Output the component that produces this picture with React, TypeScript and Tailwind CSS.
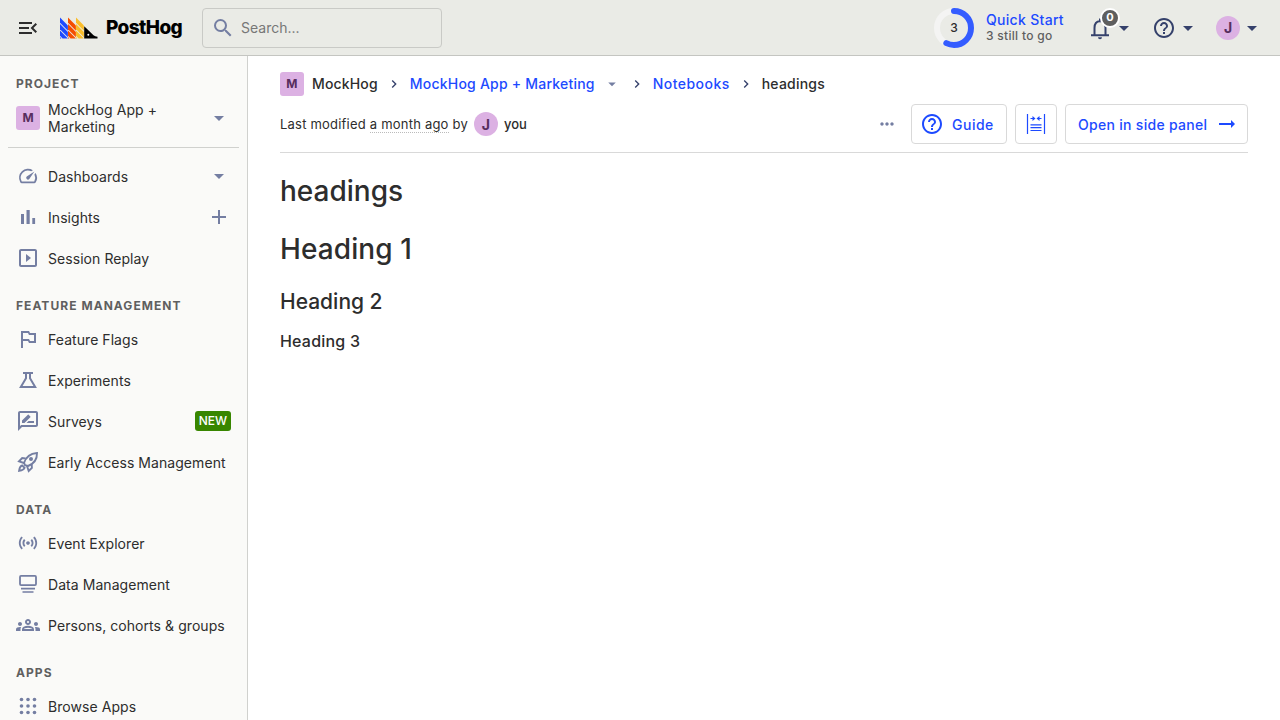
import type { ReactNode } from 'react';
import {
  MdMenuOpen, MdSearch, MdHelpOutline, MdArrowDropDown, MdChevronRight, MdMoreHoriz,
  MdOutlinedFlag, MdOutlineRateReview, MdOutlineGroups, MdAdd, MdOutlineSlideshow, MdSensors,
} from 'react-icons/md';

function Icon({ children }: { children: ReactNode }) {
  return <svg viewBox="0 0 24 24" className="size-6 shrink-0" fill="none" stroke="currentColor" strokeWidth="2">{children}</svg>;
}

const Gauge = () => (
  <Icon>
    <g transform="translate(1.2 1.2) scale(0.9)" fill="currentColor" stroke="none">
      <path d="M20.380 8.570l-1.230 1.850a8 8 0 0 1-.22 7.580H5.070A8 8 0 0 1 15.580 6.850l1.850-1.230A10 10 0 0 0 3.350 19a2 2 0 0 0 1.720 1h13.850a2 2 0 0 0 1.740-1 10 10 0 0 0-.27-10.440z" />
      <path d="M10.590 15.410a2 2 0 0 0 2.830 0l5.660-8.490-8.490 5.660a2 2 0 0 0 0 2.830z" />
    </g>
  </Icon>
);
const Bars = () => (
  <Icon><path d="M5 9h3v10H5zM10.500 5h3.200v14h-3.200zM16.300 13h2.800v6h-2.800z" fill="currentColor" stroke="none" /></Icon>
);
const Flask = () => (
  <Icon><path d="M7 5h10M10 5v5.200L4.800 19h14.400L14 10.200V5" /></Icon>
);
const Rocket = () => (
  <Icon>
    <path d="M9 15.200 8 13C9.700 7.500 13.500 3.600 21 3c.2 6.600-3.600 10.900-9 13z" strokeWidth="1.900" />
    <path d="M9.600 8.400 6.200 8.100 3 11.300l5 1.700M15.700 14.400l.2 3.400-3.200 3.200-1.700-5M6.300 15.500c-2 .3-2.800 2.600-3.200 5.300 2.600-.4 5-1 5.500-3z" strokeWidth="1.900" />
    <circle cx="15" cy="9" r="2" fill="currentColor" stroke="none" />
  </Icon>
);
const Database = () => (
  <Icon><rect x="4" y="3.900" width="16" height="9.200" rx="1" strokeWidth="1.800" /><path d="M5 16.600h14M6.500 20h11" strokeWidth="1.700" /></Icon>
);
const Dots = () => (
  <Icon>
    {[5.5, 12, 18.5].map((y) => [5.5, 12, 18.5].map((x) => (
      <circle key={`${x}-${y}`} cx={x} cy={y} r="1.8" fill="currentColor" stroke="none" />
    )))}
  </Icon>
);
const Bell = () => (
  <Icon>
    <path d="M3 19.200h18M6.500 19v-7c0-4.200 2-6.800 5.500-6.800s5.500 2.600 5.500 6.800v7" />
    <path d="M12 2.500v2.500" />
    <path d="M10 21.300h4a2 2 0 0 1-4 0z" fill="currentColor" stroke="none" />
  </Icon>
);
const WidthToggle = () => (
  <Icon>
    <path d="M3.500 2v20M20.500 2v20" strokeWidth="1.200" />
    <path d="M6.500 12.800h11M6.500 15.600h11M6.500 18.500h11M6.500 6.500h4M17.500 6.500h-4" strokeWidth="1.200" />
    <path d="M8.500 4v5l3-2.500zM15.500 4v5l-3-2.500z" fill="currentColor" stroke="none" />
  </Icon>
);
const ArrowRight = () => (
  <Icon><path d="M4 11h12V8l4 4-4 4v-3H4z" fill="currentColor" stroke="none" /></Icon>
);

function Stripes() {
  return (
    <>
      <path d="M0 .5 7.900 8.400V13.700L0 5.800z" />
      <path d="M0 7 7.900 14.900V20.200L0 12.300z" />
      <path d="M0 13.500 7.900 21.400H2.600L0 18.800z" />
      <path d="M0 20 1.400 21.400H0z" />
    </>
  );
}

function Logo() {
  return (
    <svg viewBox="0 0 38 22" className="h-[22px] w-[38px] shrink-0">
      <g fill="#1d4aff"><Stripes /></g>
      <g fill="#f54e00" transform="translate(8 0)"><Stripes /></g>
      <g fill="#f9bd2b" transform="translate(16 0)"><Stripes /></g>
      <path d="M24.200 9.300 33.500 18.300c1.100.9 2.300 1.300 4 1.400V21.400H24.200z" />
      <circle cx="28.300" cy="17.800" r="1" fill="#fff" />
    </svg>
  );
}

function Lettermark({ round, children }: { round?: boolean; children: string }) {
  return (
    <span className={`flex size-6 shrink-0 items-center justify-center bg-[#dcb1e3] font-bold text-[#572e5e] ${round ? 'rounded-full text-[14px]' : 'rounded-[3px] text-[12px]'}`}>{children}</span>
  );
}

function Item({ icon, label, side }: { icon: ReactNode; label: string; side?: ReactNode }) {
  return (
    <li className="flex h-10 items-center gap-2 pl-2 text-[#747ea2]">
      {icon}
      <span className="flex-1 whitespace-nowrap text-[14px] tracking-[0.06px] text-[#2d2d2d]">{label}</span>
      {side}
    </li>
  );
}

const Section = ({ children }: { children: string }) => (
  <h5 className="mt-[15px] flex h-[26px] items-center pl-2 text-[12px] font-bold tracking-[1.05px] text-[#5f5f5f]">{children}</h5>
);

export default function App() {
  return (
    <div className="flex h-[720px] w-[1280px] flex-col overflow-hidden bg-white font-['Inter',sans-serif] text-[14px] text-[#2d2d2d]">
      <header className="flex h-14 shrink-0 items-center border-b border-[#c4c5c1] bg-[#eaebe6] px-4">
        <MdMenuOpen className="size-6 text-[#2d2d2d]" />
        <div className="ml-5 flex w-[142px] items-center gap-2">
          <Logo />
          <span className="text-[19px] leading-none font-extrabold tracking-[-0.6px] text-black">PostHog</span>
        </div>
        <div className="flex h-10 w-60 items-center gap-1.5 rounded border border-[#c9cac6] pl-2 text-[#777]">
          <MdSearch className="size-6 text-[#747ea2]" />
          <span>Search...</span>
        </div>
        <div className="ml-auto flex items-center">
          <div className="grid size-10 place-items-center">
            <svg viewBox="0 0 40 40" className="col-start-1 row-start-1 size-10">
              <circle cx="20" cy="20" r="17" fill="none" stroke="#f4f4f3" strokeWidth="6" />
              <circle cx="20" cy="20" r="17" fill="none" stroke="#345cff" strokeWidth="6" strokeLinecap="round" strokeDasharray="61 107" transform="rotate(-90 20 20)" />
            </svg>
            <span className="col-start-1 row-start-1 text-[12px] font-medium">3</span>
          </div>
          <div className="ml-3 w-[102px] leading-4">
            <div className="font-medium tracking-[0.3px] text-[#1d4aff]">Quick Start</div>
            <div className="text-[12px] font-medium tracking-[0.3px] text-[#5f5f5f]">3 still to go</div>
          </div>
          <div className="relative flex items-center text-[#35416b]">
            <Bell />
            <span className="absolute -top-2 left-3 flex size-5 items-center justify-center rounded-full border-2 border-white bg-[#5f5f5f] text-[11px] font-bold text-white">0</span>
            <MdArrowDropDown className="size-6" />
          </div>
          <div className="ml-4 flex items-center text-[#35416b]">
            <MdHelpOutline className="size-6" /><MdArrowDropDown className="size-6" />
          </div>
          <div className="ml-4 flex items-center text-[#35416b]">
            <Lettermark round>J</Lettermark><MdArrowDropDown className="size-6" />
          </div>
        </div>
      </header>
      <div className="flex min-h-0 flex-1">
        <aside className="w-[248px] shrink-0 overflow-hidden border-r border-[#d0d1ce] bg-[#fafaf8] px-2">
          <Section>PROJECT</Section>
          <div className="flex h-[42px] items-center gap-2 pl-2">
            <Lettermark>M</Lettermark>
            <span className="flex-1 leading-[17px] tracking-[0.08px]">MockHog App +<br />Marketing</span>
            <MdArrowDropDown className="mr-2 size-6 text-[#747ea2]" />
          </div>
          <div className="mt-2 mb-2 h-px bg-[#d0d1ce]" />
          <ul className="flex flex-col gap-px">
            <Item icon={<Gauge />} label="Dashboards" side={<MdArrowDropDown className="mr-2 size-6" />} />
            <Item icon={<Bars />} label="Insights" side={<MdAdd className="mr-2 size-6" />} />
            <Item icon={<MdOutlineSlideshow className="size-6" />} label="Session Replay" />
          </ul>
          <Section>FEATURE MANAGEMENT</Section>
          <ul className="flex flex-col gap-px">
            <Item icon={<MdOutlinedFlag className="size-6" />} label="Feature Flags" />
            <Item icon={<Flask />} label="Experiments" />
            <Item icon={<MdOutlineRateReview className="size-6" />} label="Surveys" side={<span className="mr-2 flex h-5 items-center rounded-[3px] bg-[#388600] px-1 text-[12px] font-medium text-white">NEW</span>} />
            <Item icon={<Rocket />} label="Early Access Management" />
          </ul>
          <Section>DATA</Section>
          <ul className="flex flex-col gap-px">
            <Item icon={<MdSensors className="mx-px size-[22px]" />} label="Event Explorer" />
            <Item icon={<Database />} label="Data Management" />
            <Item icon={<MdOutlineGroups className="size-6" />} label="Persons, cohorts & groups" />
          </ul>
          <Section>APPS</Section>
          <ul><Item icon={<Dots />} label="Browse Apps" /></ul>
        </aside>
        <main className="flex-1 px-8 pt-4">
          <nav className="flex h-6 items-center gap-2 font-medium tracking-[0.22px]">
            <Lettermark>M</Lettermark>
            <span className="pb-0.5 tracking-[0.15px]">MockHog</span>
            <MdChevronRight className="size-4 text-[#35416b]" />
            <span className="pb-0.5 text-[#1d4aff]">MockHog App + Marketing</span>
            <MdArrowDropDown className="size-[18px] text-[#747ea2]" />
            <MdChevronRight className="size-4 text-[#35416b]" />
            <span className="pb-0.5 tracking-[0.45px] text-[#1d4aff]">Notebooks</span>
            <MdChevronRight className="size-4 text-[#35416b]" />
            <span className="pb-0.5">headings</span>
          </nav>
          <div className="mt-2 flex h-[49px] items-start border-b border-[#d9d9d9]">
            <div className="flex h-10 items-center text-[13px]">
              <span className="pt-0.5 tracking-[0.21px]">Last modified <span className="border-b border-dotted border-[#bbb]">a month ago</span> by</span>
              <span className="mr-1.5 ml-1.5"><Lettermark round>J</Lettermark></span>
              <span className="pt-0.5 font-medium">you</span>
            </div>
            <div className="ml-auto flex h-10 items-center gap-2 font-medium tracking-[0.3px] text-[#1d4aff]">
              <MdMoreHoriz className="mr-1.5 size-5 text-[#747ea2]" />
              <button className="flex h-10 w-24 items-center gap-2 rounded border border-[#d9d9d9] pl-2 tracking-[0.5px]"><MdHelpOutline className="size-6" />Guide</button>
              <button className="flex h-10 w-[42px] items-center justify-center rounded border border-[#d9d9d9]"><WidthToggle /></button>
              <button className="flex h-10 w-[183px] items-center justify-between rounded border border-[#d9d9d9] pr-2 pl-3">Open in side panel<ArrowRight /></button>
            </div>
          </div>
          <h1 className="mt-5 text-[28px] leading-9 font-medium">headings</h1>
          <h1 className="mt-[22px] text-[28px] leading-9 font-medium tracking-[0.1px]">Heading 1</h1>
          <h2 className="mt-[21px] text-[21px] leading-7 font-medium">Heading 2</h2>
          <h3 className="mt-[13px] text-[16px] leading-6 font-medium tracking-[0.2px]">Heading 3</h3>
        </main>
      </div>
    </div>
  );
}
